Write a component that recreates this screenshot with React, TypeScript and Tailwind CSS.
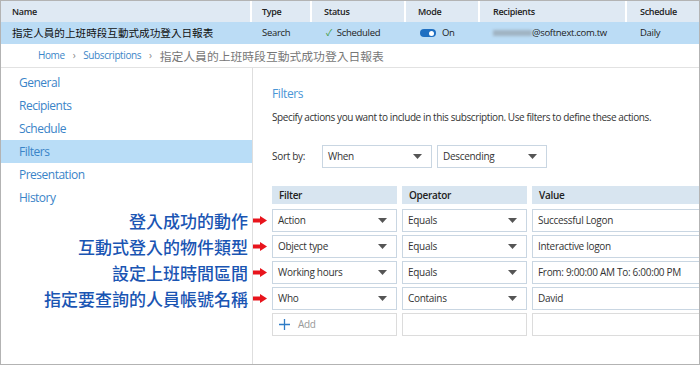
import React from "react";

const FONT = "font-['Open_Sans','Noto_Sans_CJK_TC',sans-serif]";
const CJK = "font-['Noto_Sans_CJK_TC','Noto_Sans',sans-serif]";

function Caret() {
  return (
    <svg width="9" height="5" viewBox="0 0 9 5" className="shrink-0">
      <path d="M0 0h9L4.5 5z" fill="#555" />
    </svg>
  );
}

function SelectBox({ text, w }: { text: string; w: string }) {
  return (
    <div className={`${w} h-[23px] border border-[#c9d6e2] bg-white flex items-center justify-between pl-[5px] pr-[9px]`}>
      <span className="text-[10px] tracking-[-0.3px] text-[#333]">{text}</span>
      <Caret />
    </div>
  );
}

function Arrow() {
  return (
    <svg width="14" height="9" viewBox="0 0 14 9">
      <rect x="0" y="2.5" width="8" height="4" fill="#e8141c" />
      <path d="M7 0L14 4.5L7 9z" fill="#e8141c" />
    </svg>
  );
}

const rows = [
  { f: "Action", o: "Equals", v: "Successful Logon", label: "登入成功的動作" },
  { f: "Object type", o: "Equals", v: "Interactive logon", label: "互動式登入的物件類型" },
  { f: "Working hours", o: "Equals", v: "From: 9:00:00 AM To: 6:00:00 PM", label: "設定上班時間區間" },
  { f: "Who", o: "Contains", v: "David", label: "指定要查詢的人員帳號名稱" },
];

const navItems = ["General", "Recipients", "Schedule", "Filters", "Presentation", "History"];

export default function App() {
  return (
    <div className={`${FONT} w-[700px] h-[365px] border border-[#b3b3b3] bg-white overflow-hidden flex flex-col relative`}>
      {/* top list header */}
      <div className="grid grid-cols-[249px_58px_92px_72px_145px_1fr] gap-x-[2px] h-[21px] text-[9px] tracking-[-0.3px] font-semibold text-[#222]">
        <div className="bg-[#dfe9f3] pl-[11px] flex items-center">Name</div>
        <div className="bg-[#dfe9f3] pl-[10px] flex items-center">Type</div>
        <div className="bg-[#dfe9f3] pl-[12px] flex items-center">Status</div>
        <div className="bg-[#dfe9f3] pl-[12px] flex items-center">Mode</div>
        <div className="bg-[#dfe9f3] pl-[13px] flex items-center">Recipients</div>
        <div className="bg-[#dfe9f3] pl-[13px] flex items-center">Schedule</div>
      </div>
      <div className="grid grid-cols-[249px_58px_92px_72px_145px_1fr] gap-x-[2px] h-[22px] bg-[#bbdcf5] text-[9.5px] tracking-[-0.3px] text-[#222]">
        <div className={`${CJK} pl-[11px] flex items-center text-[10.6px] tracking-normal text-[#111]`}>指定人員的上班時段互動式成功登入日報表</div>
        <div className="pl-[10px] flex items-center">Search</div>
        <div className="pl-[14px] flex items-center gap-[5px]">
          <span className="text-[#3a9a3a] text-[9px]">✓</span>
          <span>Scheduled</span>
        </div>
        <div className="pl-[14px] flex items-center gap-[6px]">
          <div className="w-[16px] h-[8px] rounded-full bg-[#1f6fc1] flex items-center justify-end pr-[2px]">
            <div className="w-[5px] h-[5px] rounded-full bg-white" />
          </div>
          <span>On</span>
        </div>
        <div className="pl-[13px] flex items-center">
          <div className="w-[39px] h-[6px] bg-[#9aa9b6] blur-[1.5px] opacity-80" />
          <span>@softnext.com.tw</span>
        </div>
        <div className="pl-[13px] flex items-center">Daily</div>
      </div>
      {/* breadcrumb */}
      <div className="h-[24px] border-b border-[#e2e2e2] flex items-center pl-[37px] text-[10px] tracking-[-0.4px] shrink-0">
        <span className="text-[#3c86c8]">Home</span>
        <span className="text-[#888] mx-[8px] text-[10px]">›</span>
        <span className="text-[#3c86c8]">Subscriptions</span>
        <span className="text-[#888] mx-[8px] text-[10px]">›</span>
        <span className={`${CJK} text-[11.8px] tracking-normal text-[#777]`}>指定人員的上班時段互動式成功登入日報表</span>
      </div>
      {/* body */}
      <div className="flex flex-1 min-h-0">
        <div className="w-[252px] shrink-0 border-r border-[#dedede] pt-[3px]">
          {navItems.map((n) => (
            <div
              key={n}
              className={`h-[23px] pl-[18px] flex items-center text-[12px] tracking-[-0.5px] text-[#3a84c8] ${n === "Filters" ? "bg-[#b9ddf7]" : ""}`}
            >
              {n}
            </div>
          ))}
        </div>
        <div className="flex-1 pl-[19px] overflow-hidden">
          <div className="mt-[18px] h-[16px] flex items-center text-[12px] tracking-[-0.4px] text-[#4a96d6]">Filters</div>
          <div className="mt-[8px] h-[14px] flex items-center text-[10px] tracking-[-0.4px] text-[#333] whitespace-nowrap">
            Specify actions you want to include in this subscription. Use filters to define these actions.
          </div>
          <div className="mt-[21px] flex items-center">
            <span className="text-[10px] tracking-[-0.3px] text-[#333] w-[50px]">Sort by:</span>
            <div className="flex gap-[5px]">
              <SelectBox text="When" w="w-[110px]" />
              <SelectBox text="Descending" w="w-[110px]" />
            </div>
          </div>
          <div className="mt-[18px] flex gap-[5px] h-[18px] text-[10px] tracking-[-0.3px] font-semibold text-[#222]">
            <div className="w-[125px] shrink-0 bg-[#d8e5f0] pl-[7px] flex items-center">Filter</div>
            <div className="w-[125px] shrink-0 bg-[#d8e5f0] pl-[7px] flex items-center">Operator</div>
            <div className="w-[200px] shrink-0 bg-[#d8e5f0] pl-[7px] flex items-center">Value</div>
          </div>
          <div className="mt-[5px] flex flex-col gap-[3px]">
            {rows.map((r) => (
              <div key={r.f} className="flex gap-[5px]">
                <SelectBox text={r.f} w="w-[125px] shrink-0" />
                <SelectBox text={r.o} w="w-[125px] shrink-0" />
                <div className="w-[200px] shrink-0 h-[23px] border border-[#c9d6e2] flex items-center pl-[5px] text-[10px] tracking-[-0.3px] text-[#333] whitespace-nowrap">
                  {r.v}
                </div>
              </div>
            ))}
            <div className="flex gap-[5px]">
              <div className="w-[125px] shrink-0 h-[23px] border border-[#dcdcdc] flex items-center pl-[6px] gap-[8px]">
                <svg width="11" height="11" viewBox="0 0 11 11">
                  <path d="M5.5 0v11M0 5.5h11" stroke="#2f7cc6" strokeWidth="1.3" />
                </svg>
                <span className="text-[10px] tracking-[-0.3px] text-[#999]">Add</span>
              </div>
              <div className="w-[125px] shrink-0 h-[23px] border border-[#dcdcdc]" />
              <div className="w-[200px] shrink-0 h-[23px] border border-[#dcdcdc]" />
            </div>
          </div>
        </div>
      </div>
      {/* annotations */}
      <div className="absolute left-0 top-[207px] w-[266px] flex flex-col gap-[2px]">
        {rows.map((r) => (
          <div key={r.label} className="h-[24px] flex items-center justify-end gap-[5px]">
            <span className={`${CJK} text-[17px] font-medium text-[#1a55b3] leading-none`}>{r.label}</span>
            <Arrow />
          </div>
        ))}
      </div>
    </div>
  );
}
